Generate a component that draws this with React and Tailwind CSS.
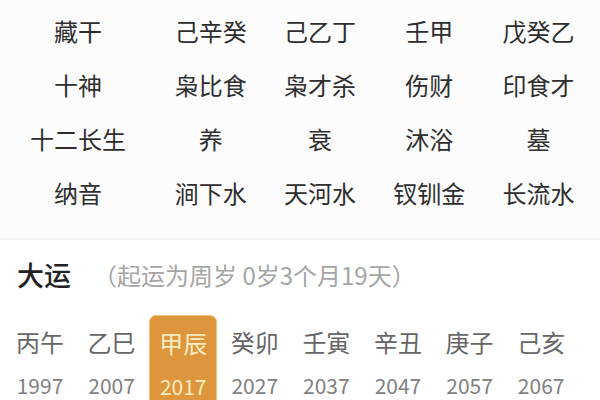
import React from "react";

const rows = [
  ["藏干", "己辛癸", "己乙丁", "壬甲", "戊癸乙"],
  ["十神", "枭比食", "枭才杀", "伤财", "印食才"],
  ["十二长生", "养", "衰", "沐浴", "墓"],
  ["纳音", "涧下水", "天河水", "钗钏金", "长流水"],
];

const dayun = [
  ["丙午", "1997"],
  ["乙巳", "2007"],
  ["甲辰", "2017"],
  ["癸卯", "2027"],
  ["壬寅", "2037"],
  ["辛丑", "2047"],
  ["庚子", "2057"],
  ["己亥", "2067"],
];

const App = () => {
  return (
    <div
      className="w-[600px] h-[400px] overflow-hidden bg-white"
      style={{ fontFamily: '"Noto Sans CJK SC", "Noto Sans", sans-serif' }}
    >
      {/* Pillars table */}
      <div className="bg-[#fdfcfd] pt-[4px] pb-[18px] border-b-2 border-[#f2f1f2]">
        {rows.map((row, i) => (
          <div key={i} className="grid grid-cols-[156px_repeat(4,109.3px)] h-[54px] items-center">
            {row.map((cell, j) => (
              <span key={j} className="text-center text-[24px] leading-[32px] text-[#2e2e2e]">
                {cell}
              </span>
            ))}
          </div>
        ))}
      </div>

      {/* Da yun */}
      <div className="pt-[17px]">
        <div className="flex items-center pl-[17px] h-[36px]">
          <span className="text-[27px] leading-[36px] text-[#222] font-medium">大运</span>
          <span className="ml-[22px] text-[24px] leading-[36px] text-[#a5a5a5]">
            （起运为周岁 0岁3个月19天）
          </span>
        </div>
        <div className="grid grid-cols-[repeat(8,71.6px)] pl-[6px] mt-[22px]">
          {dayun.map(([gz, year], i) => (
            <div
              key={i}
              className={`w-[68px] h-[90px] flex flex-col items-center pt-[11px] ${
                i === 2 ? "bg-[#dd963b] rounded-t-[7px] border border-[#f0c27a]" : ""
              }`}
            >
              <span
                className={`text-[24px] leading-[32px] ${i === 2 ? "text-[#fdecc0]" : "text-[#666]"}`}
              >
                {gz}
              </span>
              <span
                className={`mt-[15px] text-[21px] leading-[24px] ${
                  i === 2 ? "text-[#fdecc0]" : "text-[#808080]"
                }`}
              >
                {year}
              </span>
            </div>
          ))}
        </div>
      </div>
    </div>
  );
};

export default App;
